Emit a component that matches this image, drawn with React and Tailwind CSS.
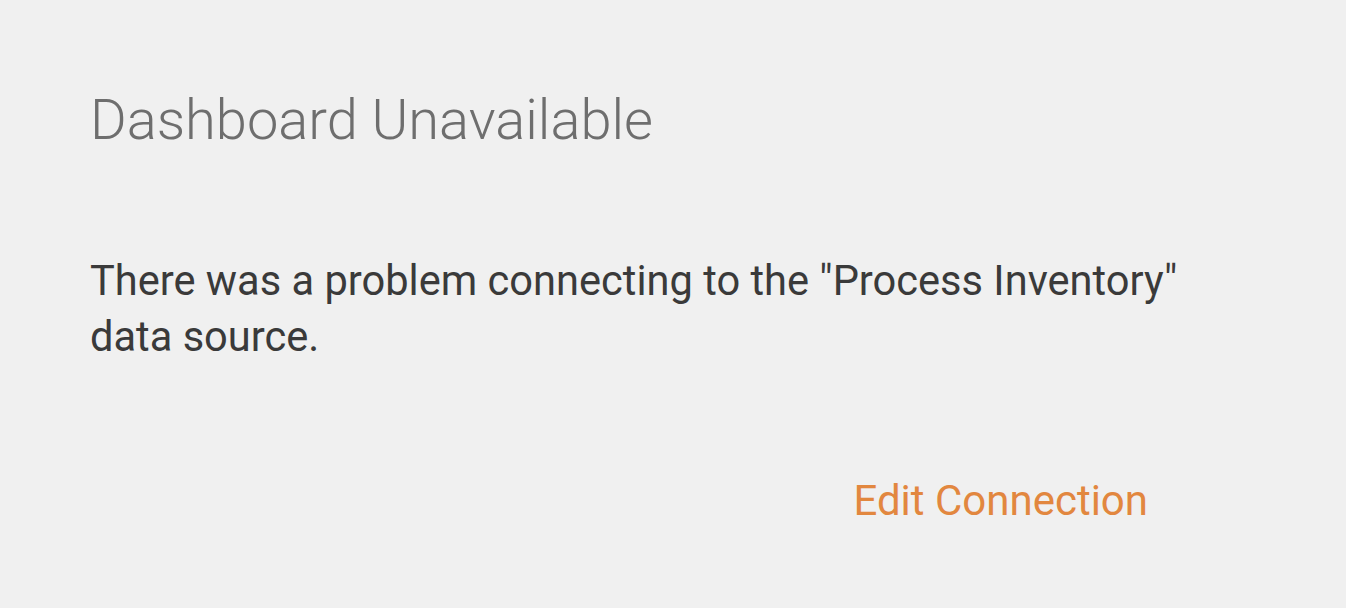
export default function App() {
  return (
    <main className="min-h-screen w-full bg-[#f0f0f0] font-['Roboto',sans-serif]">
      <div className="w-[1240px] pl-[90px] pt-[90px]">
        <h1 className="text-[56px] font-light leading-[60px] text-[#6e6e6e]">Dashboard Unavailable</h1>
        <p className="mt-[103px] text-[41.6px] leading-[56px] text-[#3a3a3a]">
          There was a problem connecting to the "Process Inventory" data source.
        </p>
        <div className="mt-[114px] flex w-[1058px] justify-end">
          <button className="text-[42px] leading-[44px] text-[#e2873f]">Edit Connection</button>
        </div>
      </div>
    </main>
  )
}
